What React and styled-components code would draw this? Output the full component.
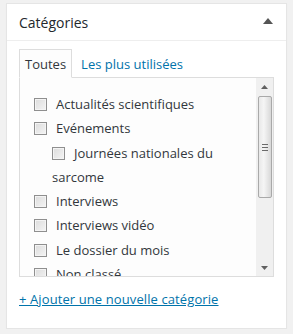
import React from 'react';
import styled, { createGlobalStyle } from 'styled-components';

const Global = createGlobalStyle`
  html, body {
    margin: 0;
    padding: 0;
    background: #f1f1f1;
    font-family: "Segoe UI", "Open Sans", sans-serif;
    font-size: 13px;
    color: #32373c;
  }
  #root {
    padding: 3px 6px 0 6px;
  }
`;

const Box = styled.div`
  width: 279px;
  height: 324px;
  background: #fff;
  border: 1px solid #e5e5e5;
  box-shadow: 0 1px 1px rgba(0, 0, 0, 0.04);
  box-sizing: content-box;
`;

const Header = styled.div`
  height: 36px;
  border-bottom: 1px solid #eee;
  display: flex;
  align-items: center;
  justify-content: space-between;
  padding: 0 13px 0 12px;
`;

const Title = styled.h2`
  margin: 0;
  font-size: 14px;
  font-weight: 400;
  color: #23282d;
`;

const Toggle = styled.span`
  width: 0;
  height: 0;
  border-left: 5px solid transparent;
  border-right: 5px solid transparent;
  border-bottom: 6px solid #555;
  margin-top: -2px;
`;

const Inside = styled.div`
  padding: 8px 12px 0 12px;
`;

const Tabs = styled.ul`
  display: flex;
  gap: 3px;
  margin: 0;
  padding: 0;
  list-style: none;
  height: 28px;
`;

const Tab = styled.li`
  padding: 0 5px;
  line-height: 28px;
  margin-bottom: -1px;
  border: 1px solid ${p => (p.$active ? '#ddd' : 'transparent')};
  border-bottom-color: ${p => (p.$active ? '#fdfdfd' : 'transparent')};
  background: ${p => (p.$active ? '#fdfdfd' : 'transparent')};
  color: ${p => (p.$active ? '#32373c' : '#0073aa')};
  position: relative;
  z-index: 1;
`;

const Panel = styled.div`
  height: 198px;
  border: 1px solid #ddd;
  background: #fdfdfd;
  display: flex;
  overflow: hidden;
`;

const List = styled.ul`
  flex: 1;
  margin: 0;
  padding: 14px 0 0 14px;
  list-style: none;
  overflow: hidden;
`;

const Item = styled.li`
  line-height: 24.3px;
  padding-left: ${p => (p.$depth || 0) * 18}px;
  padding-right: 4px;
`;

const Check = styled.span`
  display: inline-block;
  width: 11px;
  height: 11px;
  border: 1px solid #8f8f8f;
  background: linear-gradient(135deg, #dcdcdc 0%, #f4f4f4 100%);
  box-shadow: inset 0 0 0 1px #f4f4f4;
  vertical-align: -2px;
  margin-right: 9px;
`;

const Scrollbar = styled.div`
  width: 17px;
  background: #f0f0f0;
  display: flex;
  flex-direction: column;
  align-items: center;
`;

const Arrow = styled.div`
  height: 17px;
  width: 17px;
  display: flex;
  align-items: center;
  justify-content: center;
`;

const Thumb = styled.div`
  width: 12px;
  height: 100px;
  margin-top: 1px;
  border: 1px solid #a9a9a9;
  border-radius: 2px;
  background: linear-gradient(90deg, #e8e8e8 0%, #f5f5f5 40%, #d8d8d8 100%);
  display: flex;
  align-items: center;
  justify-content: center;
`;

const Grip = styled.div`
  width: 6px;
  height: 7px;
  background: repeating-linear-gradient(180deg, #6a6a6a 0 1px, transparent 1px 3px);
`;

const Track = styled.div`
  flex: 1;
`;

const AddLink = styled.a`
  display: inline-block;
  margin-top: 13px;
  color: #0073aa;
  text-decoration: underline;
  line-height: 19px;
  letter-spacing: 0.1px;
`;

const items = [
  { label: 'Actualités scientifiques' },
  { label: 'Evénements' },
  { label: 'Journées nationales du sarcome', depth: 1 },
  { label: 'Interviews' },
  { label: 'Interviews vidéo' },
  { label: 'Le dossier du mois' },
  { label: 'Non classé' },
];

function Tri({ up }) {
  return (
    <svg width="7" height="4" viewBox="0 0 7 4">
      <path d={up ? 'M0 4 L3.5 0 L7 4 Z' : 'M0 0 L3.5 4 L7 0 Z'} fill="#606060" />
    </svg>
  );
}

export default function App() {
  return (
    <>
      <Global />
      <Box>
        <Header>
          <Title>Catégories</Title>
          <Toggle />
        </Header>
        <Inside>
          <Tabs>
            <Tab $active>Toutes</Tab>
            <Tab>Les plus utilisées</Tab>
          </Tabs>
          <Panel>
            <List>
              {items.map(it => (
                <Item key={it.label} $depth={it.depth}>
                  <Check />
                  {it.label}
                </Item>
              ))}
            </List>
            <Scrollbar>
              <Arrow><Tri up /></Arrow>
              <Thumb><Grip /></Thumb>
              <Track />
              <Arrow><Tri /></Arrow>
            </Scrollbar>
          </Panel>
          <AddLink href="#">+ Ajouter une nouvelle catégorie</AddLink>
        </Inside>
      </Box>
    </>
  );
}
